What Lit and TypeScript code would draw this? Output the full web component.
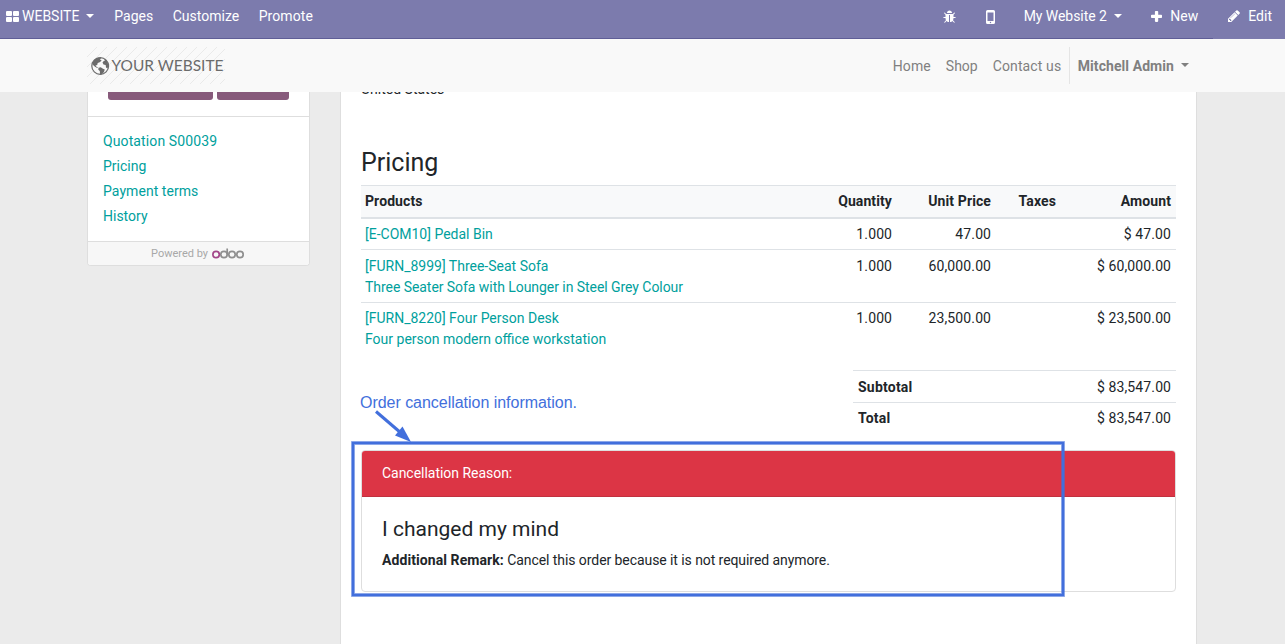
import { LitElement, html, css } from "lit";
import { customElement } from "lit/decorators.js";

interface Line { name: string; note?: string; qty: string; price: string; amount: string; }

const LINES: Line[] = [
  { name: "[E-COM10] Pedal Bin", qty: "1.000", price: "47.00", amount: "$ 47.00" },
  { name: "[FURN_8999] Three-Seat Sofa", note: "Three Seater Sofa with Lounger in Steel Grey Colour", qty: "1.000", price: "60,000.00", amount: "$ 60,000.00" },
  { name: "[FURN_8220] Four Person Desk", note: "Four person modern office workstation", qty: "1.000", price: "23,500.00", amount: "$ 23,500.00" },
];

@customElement("editor-bar")
class EditorBar extends LitElement {
  static styles = css`
    :host { display: flex; height: 39px; box-sizing: border-box; background: #7c7bad; color: #fff; font-size: 14px; line-height: 21px; padding: 6px 13px 0 6px; justify-content: space-between; position: relative; }
    .rule { position: absolute; left: 0; bottom: 0; width: 1213px; height: 1px; background: #5f5e97; }
    .group { display: flex; height: 21px; align-items: center; white-space: nowrap; }
    .caret { width: 0; height: 0; border: 4px solid transparent; border-top-color: currentColor; border-bottom: 0; margin-left: 7px; margin-top: -2px; }
    svg { display: block; fill: currentColor; flex: none; }
    .apps { margin-right: 3px; }
    .pages { margin-left: 20px; }
    .customize { margin-left: 19.500px; }
    .promote { margin-left: 19.500px; letter-spacing: .08px; }
    .phone { margin-left: 30px; }
    .site { margin-left: 29px; letter-spacing: -.05px; }
    .plus { margin-left: 29.500px; }
    .new { margin-left: 8px; }
    .pencil { margin-left: 30px; margin-top: -1px; }
    .edit { margin-left: 8px; }
  `;
  render() {
    return html`
      <div class="group">
        <svg class="apps" width="13" height="11" viewBox="0 0 13 11"><rect width="6" height="5" rx="1"/><rect x="7" width="6" height="5" rx="1"/><rect y="6" width="6" height="5" rx="1"/><rect x="7" y="6" width="6" height="5" rx="1"/></svg>
        <span>WEBSITE</span><i class="caret"></i>
        <span class="pages">Pages</span><span class="customize">Customize</span><span class="promote">Promote</span>
      </div>
      <div class="group">
        <svg width="13" height="14" viewBox="0 0 1664 1792"><path d="M1632 960q0 26-19 45t-45 19h-224q0 171-67 290l208 209q19 19 19 45t-19 45q-18 19-45 19t-45-19l-198-197q-5 5-15 13t-42 28.500-65 36.500-82 29-97 13V640H768v896q-51 0-101.500-13.500t-87-33-66-39-43.500-32.500l-15-14-183 207q-20 21-48 21-24 0-43-16-19-18-20.500-44.500T176 1525l202-227q-58-114-58-274H96q-26 0-45-19t-19-45 19-45 45-19h224V602L147 429q-19-19-19-45t19-45 45-19 45 19l173 173h844l173-173q19-19 45-19t45 19 19 45-19 45l-173 173v294h224q26 0 45 19t19 45zM1152 384H512q0-133 93.500-226.500T832 64t226.500 93.500T1152 384z"/></svg>
        <svg class="phone" width="9" height="14" viewBox="0 0 9 14"><path fill-rule="evenodd" d="M1.500 0h6A1.500 1.500 0 0 1 9 1.500v11A1.500 1.500 0 0 1 7.500 14h-6A1.500 1.500 0 0 1 0 12.500v-11A1.500 1.500 0 0 1 1.500 0zM1.500 2.500v8.500h6V2.500zM4.500 11.800a.7.7 0 1 0 0 1.400.7.7 0 0 0 0-1.400z"/></svg>
        <span class="site">My Website 2</span><i class="caret"></i>
        <svg class="plus" width="11" height="11" viewBox="0 0 11 11"><path d="M4.700 0h1.700q.8 0 .8.800v3h3q.8 0 .8.800v1.700q0 .8-.8.800h-3v3q0 .8-.8.800H4.700q-.8 0-.8-.8v-3h-3Q0 7.100 0 6.300V4.600q0-.8.900-.8h3v-3q0-.8.800-.8z"/></svg>
        <span class="new">New</span>
        <svg class="pencil" width="12" height="14" viewBox="0 0 1536 1792"><path d="M363 1536l91-91-235-235-91 91v107h128v128h107zm523-928q0-22-22-22-10 0-17 7l-542 542q-7 7-7 17 0 22 22 22 10 0 17-7l542-542q7-7 7-17zm-54-192l416 416-832 832H0v-416zm683 96q0 53-37 90l-166 166-416-416 166-165q36-38 90-38 53 0 91 38l235 234q37 39 37 91z"/></svg>
        <span class="edit">Edit</span>
      </div>
      <div class="rule"></div>`;
  }
}

@customElement("site-header")
class SiteHeader extends LitElement {
  static styles = css`
    :host { display: flex; height: 53px; box-sizing: border-box; background: #f9f9f9; color: #808080; font-size: 14px; line-height: 21px; padding: 0 96px 0 87px; justify-content: space-between; align-items: center; white-space: nowrap; position: relative; z-index: 1; }
    .logo { display: block; overflow: visible; }
    .brand { font: 16px Lato, sans-serif; fill: #6b6b6b; }
    .menu { display: flex; align-items: center; }
    .menu span { margin-right: 15px; padding-top: 2px; }
    .home { letter-spacing: .1px; }
    .menu .contact { letter-spacing: .12px; margin-right: 14.500px; }
    .user { display: flex; align-items: center; box-sizing: border-box; height: 37px; padding-top: 2px; border-left: 1px solid #e5e5e5; margin-left: -7px; padding-left: 8px; font-weight: 700; letter-spacing: .07px; }
    .caret { width: 0; height: 0; border: 4px solid transparent; border-top-color: currentColor; border-bottom: 0; margin-left: 7px; margin-top: -4px; }
  `;
  render() {
    return html`
      <svg class="logo" width="139" height="37" viewBox="0 0 139 37">
        <defs><pattern id="hatch" width="10" height="10" patternUnits="userSpaceOnUse"><path d="M-1 11L11 -1M-1 1L1 -1M9 11L11 9" stroke="#e6e6e6" stroke-width=".8"/></pattern></defs>
        <rect width="138" height="37" fill="url(#hatch)"/>
        <circle cx="13.200" cy="19" r="8.400" fill="#f9f9f9" stroke="#6b6b6b" stroke-width="1.200"/>
        <path fill="#6b6b6b" d="M5.500 15.500l2.500-3.500 3.500-1.500 2.700.5-1.200 1.500 1.700 1-2 1.700-2 .8-.5 2-1.700.5 1 1.300 1.500.7-.7.500-2.300-1.200L6 18zM17 12l2.200 1 1.500 2.500.6 3.500-.8 2.500-1.500-1-.3-2.500-2.200-.5-1-2 1.300-1.500 1.200-.5zM11.500 20.700l2.200-.4 2.300 1.500 1.800.7-1 2.700-2.300 2.300-1.500-.5-.2-3-1.500-1.300z"/>
        <text class="brand" x="24.500" y="24.200" textLength="112" lengthAdjust="spacingAndGlyphs">YOUR WEBSITE</text>
      </svg>
      <div class="menu">
        <span class="home">Home</span><span>Shop</span><span class="contact">Contact us</span>
        <div class="user">Mitchell Admin<i class="caret"></i></div>
      </div>`;
  }
}

@customElement("order-sidebar")
class OrderSidebar extends LitElement {
  static styles = css`
    :host { display: block; box-sizing: border-box; width: 223px; height: 174px; border: 1px solid #dedede; border-top: 0; border-radius: 0 0 4px 4px; background: #fff; font-size: 14px; line-height: 21px; overflow: hidden; }
    .actions { display: flex; gap: 4px; height: 24px; padding-left: 20px; border-bottom: 1px solid #dedede; }
    .btn { height: 8px; border-radius: 0 0 3px 3px; background: #875a7b; }
    .wide { width: 105px; }
    .narrow { width: 72px; }
    .links { display: flex; flex-direction: column; gap: 4px; height: 124px; box-sizing: border-box; padding: 14px 15px 0; color: #00a09d; }
    .quote { letter-spacing: .11px; }
    .terms { letter-spacing: .06px; }
    .foot { display: flex; justify-content: center; align-items: center; box-sizing: border-box; height: 25px; border-top: 1px solid #dedede; background: #f7f7f7; color: #a8a8a8; font-size: 11px; gap: 4px; padding: 0 2px 2px 0; }
    svg { display: block; fill: none; stroke-width: 1.700; }
  `;
  render() {
    return html`
      <div class="actions"><div class="btn wide"></div><div class="btn narrow"></div></div>
      <div class="links"><span class="quote">Quotation S00039</span><span>Pricing</span><span class="terms">Payment terms</span><span>History</span></div>
      <div class="foot"><span>Powered by</span>
        <svg width="32" height="11" viewBox="0 0 32 11"><g stroke="#8f8f8f"><circle cx="12" cy="6.500" r="3.200"/><path d="M15.200 6.500V.5"/><circle cx="20" cy="6.500" r="3.200"/><circle cx="28" cy="6.500" r="3.200"/></g><circle cx="4.100" cy="6.500" r="3.200" stroke="#a24689"/></svg>
      </div>`;
  }
}

@customElement("order-content")
class OrderContent extends LitElement {
  static styles = css`
    :host { display: flex; flex-direction: column; box-sizing: border-box; width: 857px; height: 565px; margin-top: -13px; border: 1px solid #dedede; border-width: 0 1px; background: #fff; padding: 0 20px; font-size: 14px; line-height: 21px; color: #212529; }
    .country { height: 21px; }
    h2 { margin: 48px 0 0; height: 37px; font-size: 25px; line-height: 30px; font-weight: 400; }
    .row { display: grid; grid-template-columns: 1fr 100px 99px 65px 115px; box-sizing: border-box; padding: 5px 5px 0 4px; border-top: 1px solid #dee2e6; text-align: right; white-space: nowrap; }
    .head { height: 34px; font-weight: 700; background: #f8f9fa; border-bottom: 2px solid #dee2e6; letter-spacing: .1px; }
    .first { height: 30px; border-top: 0; }
    .double { height: 53px; padding-top: 6px; }
    .last { height: 68px; }
    .name { text-align: left; color: #00a09d; display: flex; flex-direction: column; }
    .description { letter-spacing: -.055px; }
    .last .description { letter-spacing: 0; }
    .title { text-align: left; }
    .number { letter-spacing: .12px; margin-right: -.12px; }
    .totals { margin-left: 492px; width: 323px; }
    .total { display: flex; justify-content: space-between; box-sizing: border-box; height: 32px; border-top: 1px solid #dee2e6; padding: 6px 5px 0; }
    .total b { letter-spacing: .22px; }
    .grand { padding-top: 5px; height: 48px; }
    .card { box-sizing: border-box; height: 142px; border: 1px solid #dedede; border-radius: 4px; overflow: hidden; }
    .reason { box-sizing: border-box; height: 46px; padding: 12px 20px 0; background: #dc3545; border-bottom: 1px solid #c0313f; color: #fff; letter-spacing: -.03px; }
    h4 { margin: 18px 20px 0; height: 35px; font-size: 21px; line-height: 28px; font-weight: 400; }
    .remark { margin: 0 20px; letter-spacing: -.075px; }
    .remark b { letter-spacing: .08px; }
  `;
  render() {
    return html`
      <div class="country">United States</div>
      <h2>Pricing</h2>
      <div class="row head"><span class="title">Products</span><span>Quantity</span><span>Unit Price</span><span>Taxes</span><span>Amount</span></div>
      ${LINES.map((l, i) => html`
        <div class="row ${["first", "double", "last"][i]}">
          <div class="name"><span>${l.name}</span><span class="description">${l.note ?? ""}</span></div>
          <span class="number">${l.qty}</span><span class="number">${l.price}</span><span></span><span class="number">${l.amount}</span>
        </div>`)}
      <div class="totals">
        <div class="total"><b>Subtotal</b><span class="number">$ 83,547.00</span></div>
        <div class="total grand"><b>Total</b><span class="number">$ 83,547.00</span></div>
      </div>
      <div class="card">
        <div class="reason">Cancellation Reason:</div>
        <h4>I changed my mind</h4>
        <div class="remark"><b>Additional Remark:</b> Cancel this order because it is not required anymore.</div>
      </div>`;
  }
}

@customElement("app-root")
class AppRoot extends LitElement {
  static styles = css`
    :host { display: block; position: relative; width: 1285px; height: 644px; overflow: hidden; background: #ebebeb; font-family: Roboto, sans-serif; }
    .body { display: flex; align-items: flex-start; gap: 30px; padding-left: 87px; }
    .callout { position: absolute; left: 0; top: 0; }
    .note { font: 16px "Liberation Sans", sans-serif; fill: #426fdc; }
  `;
  render() {
    return html`
      <editor-bar></editor-bar>
      <site-header></site-header>
      <div class="body"><order-sidebar></order-sidebar><order-content></order-content></div>
      <svg class="callout" width="1285" height="644" viewBox="0 0 1285 644">
        <text class="note" x="360" y="408" textLength="217">Order cancellation information.</text>
        <path d="M376 411.500L401 433" stroke="#426fdc" stroke-width="3"/>
        <path d="M411 442L395 435.500L402.500 426.500Z" fill="#426fdc"/>
        <rect x="353" y="443" width="710" height="152" fill="none" stroke="#426fdc" stroke-opacity=".5" stroke-width="4"/>
        <rect x="353" y="443" width="710" height="152" fill="none" stroke="#426fdc" stroke-width="2.400"/>
      </svg>`;
  }
}
